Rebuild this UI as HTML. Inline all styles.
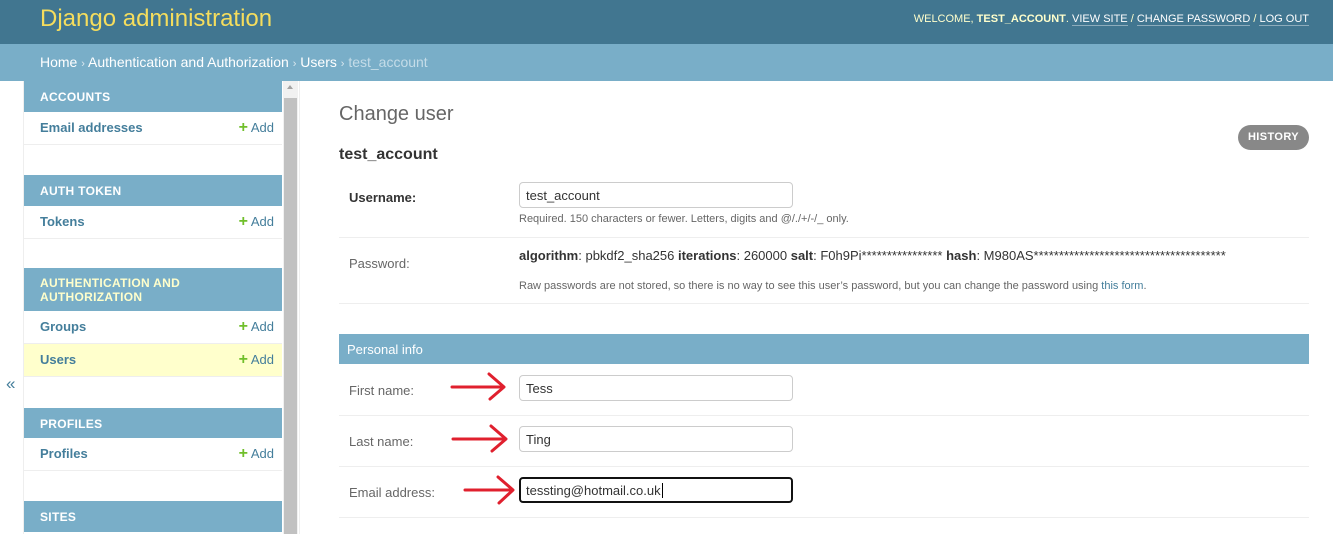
<!DOCTYPE html>
<html><head><meta charset="utf-8"><style>
*{box-sizing:border-box;margin:0;padding:0}
body{width:1333px;height:534px;overflow:hidden;font-family:"Liberation Sans",sans-serif;background:#fff;position:relative;color:#333}
.hdr{position:absolute;left:0;top:0;width:1333px;height:44px;background:#417690}
.hdr .t{position:absolute;left:40px;top:5px;font-size:24px;color:#f5dd5d;font-weight:300}
.hdr .u{position:absolute;right:24px;top:13px;font-size:11px;color:#ffc}
.hdr .u a{color:#fff;border-bottom:1px solid rgba(255,255,255,.4);text-decoration:none}
.bc{position:absolute;left:0;top:44px;width:1333px;height:37px;background:#79aec8;color:#fff;font-size:14px;padding:10px 40px}
.bc span.s{font-size:11px;color:#dbe8ef}
.bc .c{color:#c4dce8}
.side{position:absolute;left:23px;top:81px;width:277px;height:453px;border-left:1px solid #eee;border-right:1px solid #eee}
.cap{position:absolute;left:0;width:258px;background:#79aec8;color:#fff;font-size:12px;font-weight:bold;padding:9px 16px;letter-spacing:.3px;line-height:14px}
.cap.y{color:#ffc}
.row{position:absolute;left:0;width:258px;height:33px;border-bottom:1px solid #eee;font-size:13px;font-weight:bold;color:#447e9b;padding:8px 16px}
.row .a{position:absolute;right:8px;top:8px;font-weight:normal;color:#447e9b}
.row .a b{color:#70bf2b;font-size:16px;line-height:13px}
.sb{position:absolute;left:259px;top:0;width:15px;height:453px;background:#f1f1f1}
.sb i{position:absolute;left:1px;top:17px;width:13px;height:436px;background:#c1c1c1}
.lbl{position:absolute;font-size:13px;color:#666}
.inp{position:absolute;left:519px;width:274px;height:26px;border:1px solid #ccc;border-radius:4px;font-size:13px;padding:5px 6px;color:#333}
.hl{position:absolute;left:339px;width:970px;height:1px;background:#eee}
.help{position:absolute;left:519px;font-size:11px;color:#666}
</style></head><body>
<div class="hdr"><div class="t">Django administration</div>
<div class="u">WELCOME, <b>TEST_ACCOUNT</b>. <a>VIEW SITE</a> / <a>CHANGE PASSWORD</a> / <a>LOG OUT</a></div></div>
<div class="bc">Home <span class="s">›</span> Authentication and Authorization <span class="s">›</span> Users <span class="s">›</span> <span class="c">test_account</span></div>
<div class="side">
<div class="cap" style="top:0;height:31px">ACCOUNTS</div>
<div class="row" style="top:31px;height:33px">Email addresses<span class="a"><b>+</b> Add</span></div>
<div class="cap" style="top:94px;height:31px">AUTH TOKEN</div>
<div class="row" style="top:125px">Tokens<span class="a"><b>+</b> Add</span></div>
<div class="cap y" style="top:187px;height:43px;padding-top:8px">AUTHENTICATION AND<br>AUTHORIZATION</div>
<div class="row" style="top:230px">Groups<span class="a"><b>+</b> Add</span></div>
<div class="row" style="top:263px;background:#ffc">Users<span class="a"><b>+</b> Add</span></div>
<div class="cap" style="top:327px;height:30px">PROFILES</div>
<div class="row" style="top:357px">Profiles<span class="a"><b>+</b> Add</span></div>
<div class="cap" style="top:420px;height:31px">SITES</div>
<div class="sb"><i></i><span style="position:absolute;left:4px;top:4px;border:3.5px solid transparent;border-bottom:4px solid #a3a3a3;border-top:0"></span></div>
</div>
<div style="position:absolute;left:6px;top:374px;color:#447e9b;font-size:17px">«</div>
<div style="position:absolute;left:339px;top:103px;font-size:20px;color:#666;font-weight:300">Change user</div>
<div style="position:absolute;left:339px;top:146px;font-size:16px;font-weight:bold;color:#333">test_account</div>
<div style="position:absolute;left:1238px;top:125px;width:71px;height:25px;border-radius:13px;background:#888;color:#fff;font-size:11px;font-weight:bold;text-align:center;line-height:25px;letter-spacing:.4px">HISTORY</div>
<div class="lbl" style="left:349px;top:190px;font-weight:bold;color:#333">Username:</div>
<div class="inp" style="top:182px">test_account</div>
<div class="help" style="top:213px">Required. 150 characters or fewer. Letters, digits and @/./+/-/_ only.</div>
<div class="hl" style="top:237px"></div>
<div class="lbl" style="left:349px;top:256px">Password:</div>
<div style="position:absolute;left:519px;top:248px;font-size:13px;color:#333"><b>algorithm</b>: pbkdf2_sha256 <b>iterations</b>: 260000 <b>salt</b>: F0h9Pi**************** <b>hash</b>: M980AS**************************************</div>
<div class="help" style="top:280px">Raw passwords are not stored, so there is no way to see this user’s password, but you can change the password using <span style="color:#447e9b">this form</span>.</div>
<div class="hl" style="top:303px"></div>
<div style="position:absolute;left:339px;top:334px;width:970px;height:30px;background:#79aec8;color:#fff;font-size:13px;padding:8px 8px">Personal info</div>
<div class="lbl" style="left:349px;top:383px">First name:</div>
<div class="inp" style="top:375px">Tess</div>
<div class="hl" style="top:415px"></div>
<div class="lbl" style="left:349px;top:434px">Last name:</div>
<div class="inp" style="top:426px">Ting</div>
<div class="hl" style="top:466px"></div>
<div class="lbl" style="left:349px;top:485px">Email address:</div>
<div class="inp" style="top:477px;border:2px solid #111;padding:4px 5px">tessting@hotmail.co.uk<span style="border-left:1px solid #000;margin-left:1px"></span></div>
<div class="hl" style="top:517px"></div>
<svg style="position:absolute;left:0;top:0" width="1333" height="534">
<g stroke="#e0202e" stroke-width="3" fill="none" stroke-linecap="round" stroke-linejoin="round">
<path d="M452 387 H503 M489 374 L504 387 L490 399"/>
<path d="M453 439 H505 M491 426 L506 439 L492 451"/>
<path d="M465 490 H512 M498 477 L513 490 L499 503"/>
</g></svg>
</body></html>
